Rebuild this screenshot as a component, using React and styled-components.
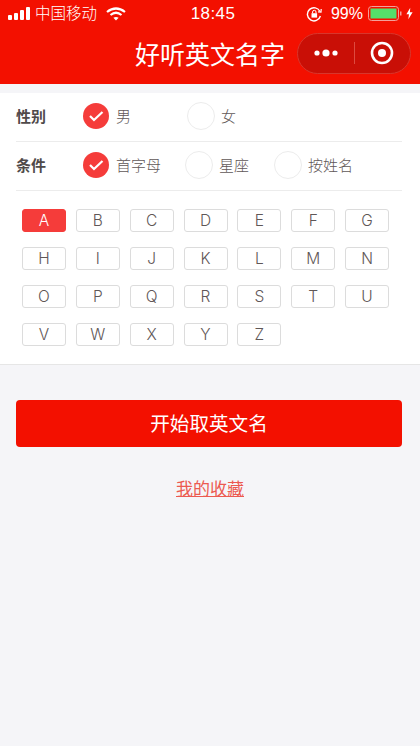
import React from 'react';
import styled, {createGlobalStyle} from 'styled-components';

const FONT = '"Noto Sans CJK SC", "Liberation Sans", sans-serif';
const LATIN = '"Liberation Sans", sans-serif';
const RED = '#f31000';
const CHECK_RED = '#f53c3a';

const GlobalStyle = createGlobalStyle`
    html, body {
        margin: 0;
        padding: 0;
        background-color: #f5f5f8;
        font-family: ${FONT};
    }
    * {
        box-sizing: border-box;
    }
`;

const Page = styled.div`
    width: 420px;
    height: 746px;
    overflow: hidden;
    background-color: #f5f5f8;
`;

const Header = styled.header`
    height: 84px;
    background-color: ${RED};
    color: #fff;
`;

const StatusBar = styled.div`
    height: 28px;
    display: grid;
    grid-template-columns: 1fr auto 1fr;
    align-items: center;
    padding: 0 2px 1px 8px;
`;

const StatusLeft = styled.div`
    display: flex;
    align-items: center;
`;

const StatusRight = styled.div`
    display: flex;
    align-items: center;
    justify-content: flex-end;
    padding-right: 5px;
`;

const Carrier = styled.span`
    font-size: 15.5px;
    line-height: 20px;
    font-weight: 300;
    margin: 0 9px 0 5px;
    padding-bottom: 3px;
`;

const Time = styled.span`
    font-family: ${LATIN};
    font-size: 17px;
    letter-spacing: 0.4px;
`;

const Percent = styled.span`
    font-family: ${LATIN};
    font-size: 16px;
    margin: 0 5px 0 9px;
`;

const BoltSvg = styled.svg`
    margin-left: 3px;
`;

const NavBar = styled.div`
    height: 56px;
    display: grid;
    grid-template-columns: 1fr auto 1fr;
    align-items: center;
    padding-bottom: 6px;
`;

const Title = styled.h1`
    grid-column: 2;
    margin: 0;
    font-size: 25px;
    line-height: 30px;
    font-weight: 400;
`;

const Capsule = styled.div`
    justify-self: end;
    margin-right: 9px;
    width: 114px;
    height: 41px;
    display: flex;
    align-items: center;
    border-radius: 21px;
    background-color: #c90f06;
    border: 1px solid #d8362c;
`;

const CapsuleSide = styled.div`
    flex: 1;
    height: 100%;
    display: flex;
    align-items: center;
    justify-content: center;
`;

const CapsuleDivider = styled.div`
    width: 1px;
    height: 22px;
    background-color: #dd4a40;
`;

const Panel = styled.section`
    margin-top: 9px;
    height: 272px;
    background-color: #fff;
    border-bottom: 1px solid #e6e6e6;
`;

const OptionRow = styled.div`
    margin: 0 18px 0 16px;
    padding-bottom: 2px;
    height: ${props => props.height}px;
    display: flex;
    align-items: center;
    border-bottom: 1px solid #ececec;
`;

const RowLabel = styled.span`
    width: 67px;
    font-size: 15px;
    line-height: 20px;
    font-weight: 700;
    color: #4f4a4a;
`;

const Option = styled.div`
    display: flex;
    align-items: center;
    width: ${props => props.width}px;
`;

const Radio = styled.span`
    width: ${props => (props.checked ? 26 : 28)}px;
    height: ${props => (props.checked ? 26 : 28)}px;
    margin-right: ${props => (props.checked ? 7 : 6)}px;
    flex: none;
    display: flex;
    align-items: center;
    justify-content: center;
    border-radius: 50%;
    background-color: ${props => (props.checked ? CHECK_RED : '#fff')};
    border: ${props => (props.checked ? 'none' : '1px solid #ececec')};
`;

const OptionText = styled.span`
    font-size: 15px;
    line-height: 20px;
    font-weight: 300;
    color: #5f5757;
`;

const LetterGrid = styled.div`
    padding: 18px 0 0 22px;
    display: grid;
    grid-template-columns: repeat(7, 44px);
    grid-auto-rows: 23px;
    column-gap: 9.85px;
    row-gap: 15px;
`;

const Letter = styled.button`
    padding: 0;
    border-radius: 3px;
    font-family: Inter, ${LATIN};
    font-size: 15.5px;
    font-weight: 300;
    line-height: 21px;
    color: ${props => (props.$active ? '#fff' : '#5f5757')};
    background-color: ${props => (props.$active ? CHECK_RED : '#fff')};
    border: 1px solid ${props => (props.$active ? CHECK_RED : '#dcdcdc')};
`;

const Actions = styled.div`
    padding: 35px 18px 0 16px;
    display: flex;
    flex-direction: column;
    align-items: center;
`;

const StartButton = styled.button`
    width: 100%;
    height: 47px;
    padding: 0 0 2px;
    border: none;
    border-radius: 4px;
    background-color: ${RED};
    color: #fff;
    font-family: ${FONT};
    font-size: 19.6px;
    line-height: 28px;
`;

const FavoriteLink = styled.a`
    margin: 29px 0 0 2px;
    font-size: 17px;
    line-height: 24px;
    color: #ec5a50;
    text-decoration: underline;
`;

const SignalIcon = () => (
    <svg width="22" height="14" viewBox="0 0 22 14" fill="#fff">
        <rect x="0" y="8" width="4" height="5" rx="1" />
        <rect x="6" y="6" width="4" height="7" rx="1" />
        <rect x="12" y="3" width="4" height="10" rx="1" />
        <rect x="18" y="0" width="4" height="13" rx="1" />
    </svg>
);

const WifiIcon = () => (
    <svg width="20" height="14" viewBox="0 0 20 14" fill="none" stroke="#fff" strokeWidth="2.2">
        <path d="M1 5 Q10 -2 19 5" />
        <path d="M4.5 8 Q10 3.5 15.5 8" />
        <path d="M10 13.5 L7.4 10.8 Q10 9 12.6 10.8 Z" fill="#fff" stroke="none" />
    </svg>
);

const LockIcon = () => (
    <svg width="16" height="16" viewBox="0 0 16 16" fill="none" stroke="#fff" strokeWidth="1.4">
        <path d="M14 5.5 A6.6 6.6 0 1 0 14.4 10" />
        <path d="M12 5.8 L15 6 L15.2 3" strokeWidth="1.2" />
        <rect x="5.5" y="7.2" width="5.6" height="4.4" fill="#fff" stroke="none" />
        <path d="M6.6 7.2 V6 a1.7 1.7 0 0 1 3.4 0 V7.2" strokeWidth="1" />
    </svg>
);

const BatteryIcon = () => (
    <svg width="35" height="15" viewBox="0 0 35 15">
        <rect x="0.5" y="0.5" width="30" height="14" rx="3" fill="none" stroke="#f3a09a" />
        <rect x="2.5" y="2.5" width="26" height="10" fill="#55e06a" />
        <rect x="32" y="5.5" width="1.5" height="4" fill="#f3a09a" />
    </svg>
);

const BoltIcon = () => (
    <BoltSvg width="7" height="13" viewBox="0 0 9 15" fill="#fff">
        <path d="M5.5 0 L0.5 8.5 H3.8 L3 15 L8.5 6 H5 Z" />
    </BoltSvg>
);

const MoreIcon = () => (
    <svg width="26" height="10" viewBox="0 0 26 10" fill="#fff">
        <circle cx="4" cy="5" r="2.6" />
        <circle cx="13" cy="5" r="3.6" />
        <circle cx="22" cy="5" r="2.6" />
    </svg>
);

const CloseIcon = () => (
    <svg width="24" height="24" viewBox="0 0 24 24" fill="none">
        <circle cx="12" cy="12" r="10" stroke="#fff" strokeWidth="2.6" />
        <circle cx="12" cy="12" r="4" fill="#fff" />
    </svg>
);

const CheckIcon = () => (
    <svg width="16" height="12" viewBox="0 0 16 12" fill="none" stroke="#fff" strokeWidth="2.2">
        <path d="M2 6 L6 10 L14.5 2" />
    </svg>
);

const LETTERS = 'ABCDEFGHIJKLMNOPQRSTUVWXYZ'.split('');

const App = () => {
    return (
        <Page>
            <GlobalStyle />
            <Header>
                <StatusBar>
                    <StatusLeft>
                        <SignalIcon />
                        <Carrier>中国移动</Carrier>
                        <WifiIcon />
                    </StatusLeft>
                    <Time>18:45</Time>
                    <StatusRight>
                        <LockIcon />
                        <Percent>99%</Percent>
                        <BatteryIcon />
                        <BoltIcon />
                    </StatusRight>
                </StatusBar>
                <NavBar>
                    <Title>好听英文名字</Title>
                    <Capsule>
                        <CapsuleSide><MoreIcon /></CapsuleSide>
                        <CapsuleDivider />
                        <CapsuleSide><CloseIcon /></CapsuleSide>
                    </Capsule>
                </NavBar>
            </Header>
            <Panel>
                <OptionRow height={49}>
                    <RowLabel>性别</RowLabel>
                    <Option width={104}>
                        <Radio checked><CheckIcon /></Radio>
                        <OptionText>男</OptionText>
                    </Option>
                    <Option>
                        <Radio />
                        <OptionText>女</OptionText>
                    </Option>
                </OptionRow>
                <OptionRow height={49}>
                    <RowLabel>条件</RowLabel>
                    <Option width={102}>
                        <Radio checked><CheckIcon /></Radio>
                        <OptionText>首字母</OptionText>
                    </Option>
                    <Option width={89}>
                        <Radio />
                        <OptionText>星座</OptionText>
                    </Option>
                    <Option>
                        <Radio />
                        <OptionText>按姓名</OptionText>
                    </Option>
                </OptionRow>
                <LetterGrid>
                    {LETTERS.map(letter => (
                        <Letter key={letter} $active={letter === 'A'}>{letter}</Letter>
                    ))}
                </LetterGrid>
            </Panel>
            <Actions>
                <StartButton>开始取英文名</StartButton>
                <FavoriteLink>我的收藏</FavoriteLink>
            </Actions>
        </Page>
    );
}

export default App;
